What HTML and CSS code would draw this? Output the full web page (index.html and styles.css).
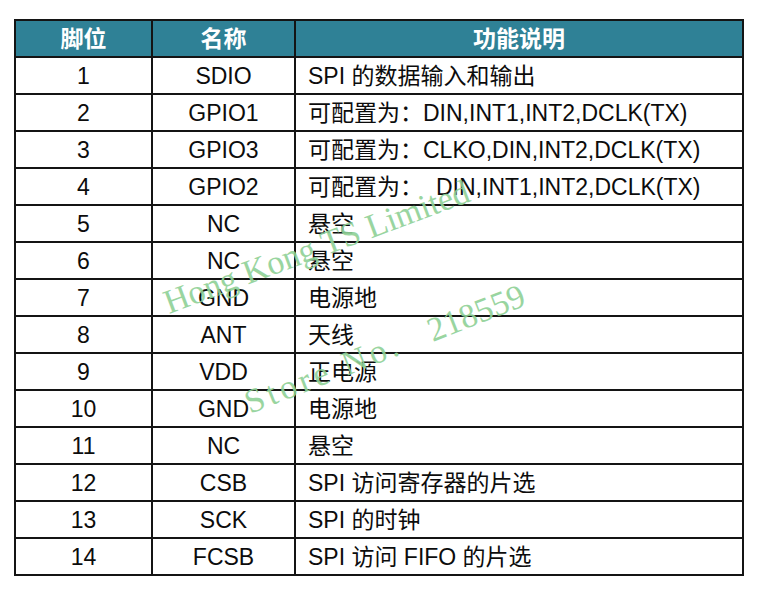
FILE: index.html
```html
<!DOCTYPE html>
<html lang="zh">
<head>
<meta charset="utf-8">
<title>引脚说明</title>
<link rel="stylesheet" href="styles.css">
</head>
<body>
<div class="sheet">
  <table class="pins">
    <colgroup>
      <col class="c-pin">
      <col class="c-name">
      <col class="c-desc">
    </colgroup>
    <thead>
      <tr><th>脚位</th><th>名称</th><th>功能说明</th></tr>
    </thead>
    <tbody>
      <tr><td>1</td><td>SDIO</td><td class="desc">SPI 的数据输入和输出</td></tr>
      <tr><td>2</td><td>GPIO1</td><td class="desc">可配置为：DIN,INT1,INT2,DCLK(TX)</td></tr>
      <tr><td>3</td><td>GPIO3</td><td class="desc">可配置为：CLKO,DIN,INT2,DCLK(TX)</td></tr>
      <tr><td>4</td><td>GPIO2</td><td class="desc">可配置为：<span class="gap">DIN,INT1,INT2,DCLK(TX)</span></td></tr>
      <tr><td>5</td><td>NC</td><td class="desc">悬空</td></tr>
      <tr><td>6</td><td>NC</td><td class="desc">悬空</td></tr>
      <tr><td>7</td><td>GND</td><td class="desc">电源地</td></tr>
      <tr><td>8</td><td>ANT</td><td class="desc">天线</td></tr>
      <tr><td>9</td><td>VDD</td><td class="desc">正电源</td></tr>
      <tr><td>10</td><td>GND</td><td class="desc">电源地</td></tr>
      <tr><td>11</td><td>NC</td><td class="desc">悬空</td></tr>
      <tr><td>12</td><td>CSB</td><td class="desc">SPI 访问寄存器的片选</td></tr>
      <tr><td>13</td><td>SCK</td><td class="desc">SPI 的时钟</td></tr>
      <tr><td>14</td><td>FCSB</td><td class="desc">SPI 访问 FIFO 的片选</td></tr>
    </tbody>
  </table>
  <div class="mark mark-hk">Hong Kong TS Limited</div>
  <div class="mark mark-store">Store No.<span class="num">218559</span></div>
</div>
</body>
</html>
```
FILE: styles.css
```css
html, body {
  margin: 0;
  padding: 0;
  background: #ffffff;
}

.sheet {
  position: relative;
  width: 757px;
  height: 594px;
  padding: 19px 0 0 14px;
  box-sizing: border-box;
  font-family: "Liberation Sans", "Noto Sans CJK SC", sans-serif;
}

.pins {
  border-collapse: collapse;
  table-layout: fixed;
  width: 728px;
  font-size: 23px;
  color: #0c0c0c;
}

.c-pin { width: 137px; }
.c-name { width: 143px; }
.c-desc { width: 448px; }

.pins th,
.pins td {
  height: 35px;
  padding: 0;
  border: 2px solid #141414;
  text-align: center;
  vertical-align: middle;
  line-height: 26px;
  white-space: nowrap;
}

.pins th {
  background: #2f8196;
  color: #ffffff;
  font-weight: bold;
  font-size: 23px;
}

.pins td.desc {
  text-align: left;
  padding-left: 12px;
}

.gap {
  margin-left: 13px;
}

.mark {
  position: absolute;
  font-family: "Liberation Serif", serif;
  font-size: 34px;
  line-height: 34px;
  color: #8fd196;
  white-space: nowrap;
  transform-origin: 0 28px;
  opacity: 0.9;
}

.mark-hk {
  left: 169px;
  top: 286px;
  transform: rotate(-20.5deg);
}

.mark-store {
  left: 250px;
  top: 386px;
  letter-spacing: 4px;
  transform: rotate(-21.5deg);
}

.mark-store .num {
  margin-left: 30px;
  letter-spacing: 0;
}
```
